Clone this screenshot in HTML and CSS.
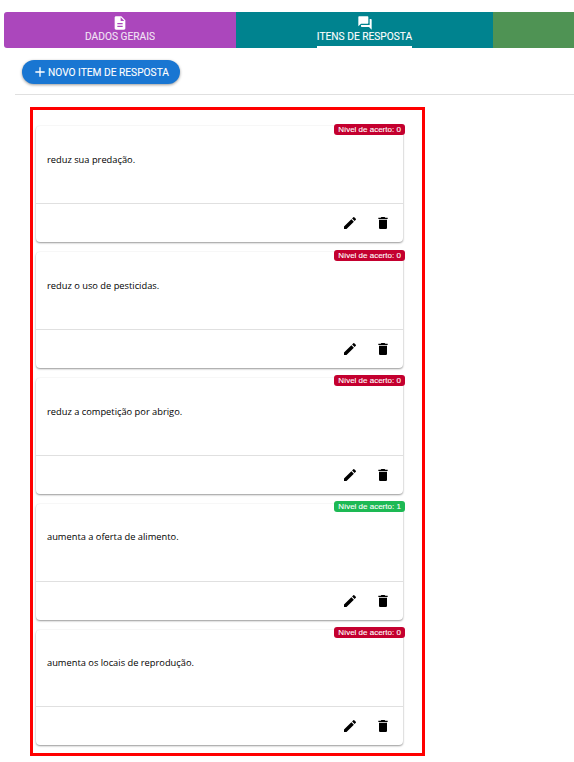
FILE: index.html
```html
<!DOCTYPE html>
<html lang="pt">
<head>
<meta charset="utf-8">
<title>Itens de resposta</title>
<link rel="stylesheet" href="styles.css">
</head>
<body>
<nav class="tabs">
  <div class="tab tab-purple">
    <svg class="tab-icon" viewBox="0 0 24 24"><path d="M14 2H6c-1.1 0-2 .9-2 2v16c0 1.1.9 2 2 2h12c1.1 0 2-.9 2-2V8l-6-6zm2 16H8v-2h8v2zm0-4H8v-2h8v2zm-3-5V3.5L18.500 9H13z"/></svg>
    <span class="tab-label">Dados gerais</span>
  </div>
  <div class="tab tab-teal">
    <svg class="tab-icon" viewBox="0 0 24 24"><path d="M21 6h-2v9H6v2c0 .55.45 1 1 1h11l4 4V7c0-.55-.45-1-1-1zm-4 6V3c0-.55-.45-1-1-1H3c-.55 0-1 .45-1 1v14l4-4h10c.55 0 1-.45 1-1z"/></svg>
    <span class="tab-label tab-label-active">Itens de resposta</span>
    <span class="tab-indicator"></span>
  </div>
  <div class="tab tab-green">
    <svg class="tab-icon" viewBox="0 0 24 24"><circle cx="12" cy="12" r="8"/></svg>
    <span class="tab-label">Gabarito</span>
  </div>
</nav>

<div class="toolbar">
  <button class="add-button" type="button">
    <svg class="add-icon" viewBox="0 0 24 24"><path d="M19 13h-6v6h-2v-6H5v-2h6V5h2v6h6v2z"/></svg>
    Novo item de resposta
  </button>
</div>

<main class="items">
  <article class="card">
    <span class="badge badge-red">Nível de acerto: 0</span>
    <p class="card-text">reduz sua predação.</p>
    <div class="card-actions">
      <svg class="action" viewBox="0 0 24 24"><path d="M3 17.250V21h3.750L17.810 9.940l-3.750-3.750L3 17.250zM20.710 7.040a.996.996 0 0 0 0-1.410l-2.340-2.340a.996.996 0 0 0-1.410 0l-1.830 1.830 3.750 3.750 1.830-1.830z"/></svg>
      <svg class="action" viewBox="0 0 24 24"><path d="M6 19c0 1.100.9 2 2 2h8c1.100 0 2-.9 2-2V7H6v12zM19 4h-3.500l-1-1h-5l-1 1H5v2h14V4z"/></svg>
    </div>
  </article>
  <article class="card">
    <span class="badge badge-red">Nível de acerto: 0</span>
    <p class="card-text">reduz o uso de pesticidas.</p>
    <div class="card-actions">
      <svg class="action" viewBox="0 0 24 24"><path d="M3 17.250V21h3.750L17.810 9.940l-3.750-3.750L3 17.250zM20.710 7.040a.996.996 0 0 0 0-1.410l-2.340-2.340a.996.996 0 0 0-1.410 0l-1.830 1.830 3.750 3.750 1.830-1.830z"/></svg>
      <svg class="action" viewBox="0 0 24 24"><path d="M6 19c0 1.100.9 2 2 2h8c1.100 0 2-.9 2-2V7H6v12zM19 4h-3.500l-1-1h-5l-1 1H5v2h14V4z"/></svg>
    </div>
  </article>
  <article class="card">
    <span class="badge badge-red">Nível de acerto: 0</span>
    <p class="card-text">reduz a competição por abrigo.</p>
    <div class="card-actions">
      <svg class="action" viewBox="0 0 24 24"><path d="M3 17.250V21h3.750L17.810 9.940l-3.750-3.750L3 17.250zM20.710 7.040a.996.996 0 0 0 0-1.410l-2.340-2.340a.996.996 0 0 0-1.410 0l-1.830 1.830 3.750 3.750 1.830-1.830z"/></svg>
      <svg class="action" viewBox="0 0 24 24"><path d="M6 19c0 1.100.9 2 2 2h8c1.100 0 2-.9 2-2V7H6v12zM19 4h-3.500l-1-1h-5l-1 1H5v2h14V4z"/></svg>
    </div>
  </article>
  <article class="card">
    <span class="badge badge-green">Nível de acerto: 1</span>
    <p class="card-text">aumenta a oferta de alimento.</p>
    <div class="card-actions">
      <svg class="action" viewBox="0 0 24 24"><path d="M3 17.250V21h3.750L17.810 9.940l-3.750-3.750L3 17.250zM20.710 7.040a.996.996 0 0 0 0-1.410l-2.340-2.340a.996.996 0 0 0-1.410 0l-1.830 1.830 3.750 3.750 1.830-1.830z"/></svg>
      <svg class="action" viewBox="0 0 24 24"><path d="M6 19c0 1.100.9 2 2 2h8c1.100 0 2-.9 2-2V7H6v12zM19 4h-3.500l-1-1h-5l-1 1H5v2h14V4z"/></svg>
    </div>
  </article>
  <article class="card">
    <span class="badge badge-red">Nível de acerto: 0</span>
    <p class="card-text">aumenta os locais de reprodução.</p>
    <div class="card-actions">
      <svg class="action" viewBox="0 0 24 24"><path d="M3 17.250V21h3.750L17.810 9.940l-3.750-3.750L3 17.250zM20.710 7.040a.996.996 0 0 0 0-1.410l-2.340-2.340a.996.996 0 0 0-1.410 0l-1.830 1.830 3.750 3.750 1.830-1.830z"/></svg>
      <svg class="action" viewBox="0 0 24 24"><path d="M6 19c0 1.100.9 2 2 2h8c1.100 0 2-.9 2-2V7H6v12zM19 4h-3.500l-1-1h-5l-1 1H5v2h14V4z"/></svg>
    </div>
  </article>
</main>
</body>
</html>
```

FILE: styles.css
```css
html, body {
  margin: 0;
  padding: 0;
  background: #fff;
  overflow: hidden;
  height: 762px;
}

body {
  padding-top: 12px;
  padding-left: 4px;
  font-family: "Roboto", "Liberation Sans", sans-serif;
  box-sizing: border-box;
}

.tabs {
  display: flex;
  height: 36px;
  width: 760px;
}

.tab {
  position: relative;
  display: flex;
  flex-direction: column;
  align-items: center;
  color: #fff;
  fill: #fff;
  box-sizing: border-box;
  padding-top: 3px;
}

.tab-purple {
  width: 232px;
  background: #ab47bc;
  border-radius: 3px 0 0 3px;
}

.tab-teal {
  width: 257px;
  background: #00838f;
}

.tab-green {
  width: 271px;
  background: #4f9354;
}

.tab-icon {
  width: 16px;
  height: 16px;
  display: block;
}

.tab-label {
  font-size: 10.200px;
  line-height: 14px;
  margin-top: -1px;
  text-transform: uppercase;
  opacity: 0.85;
  white-space: nowrap;
  -webkit-text-stroke: 0.1px currentColor;
}

.tab-label-active {
  opacity: 1;
}

.tab-indicator {
  position: absolute;
  left: 81px;
  width: 95px;
  bottom: 0;
  height: 2px;
  background: #fff;
}

.toolbar {
  margin: 12px 0 0 11px;
  padding: 0 0 10px 7px;
  border-bottom: 1px solid #e0e0e0;
  width: 559px;
  box-sizing: border-box;
}

.add-button {
  display: flex;
  align-items: center;
  gap: 0;
  height: 24px;
  width: 158px;
  border: 0;
  padding: 0 0 0 10px;
  border-radius: 12px;
  background: #1976d2;
  color: #fff;
  fill: #fff;
  font-family: "Roboto", "Liberation Sans", sans-serif;
  font-size: 10.200px;
  text-transform: uppercase;
  box-shadow: 0 1px 3px rgba(0, 0, 0, 0.4);
  white-space: nowrap;
  -webkit-text-stroke: 0.1px currentColor;
}

.add-icon {
  width: 16px;
  height: 16px;
  flex: none;
}

.items {
  margin: 12px 0 0 26px;
  width: 395px;
  height: 649px;
  border: 3px solid #f00;
  box-sizing: border-box;
  padding: 16px 0 0 3px;
  display: flex;
  flex-direction: column;
  gap: 10px;
}

.card {
  position: relative;
  width: 367px;
  height: 115.900px;
  flex: none;
  background: #fff;
  border-radius: 4px;
  box-shadow: 0 1px 2px rgba(0, 0, 0, 0.4), 0 0 2px rgba(0, 0, 0, 0.06);
  display: flex;
  flex-direction: column;
}

.badge {
  position: absolute;
  top: -2.350px;
  right: -2px;
  height: 11px;
  width: 71px;
  border-radius: 3px;
  color: #fff;
  font-family: "Liberation Sans", sans-serif;
  font-size: 8px;
  line-height: 11px;
  text-align: center;
  white-space: nowrap;
  -webkit-text-stroke: 0.1px currentColor;
}

.badge-red {
  background: #c4002f;
}

.badge-green {
  background: #1db954;
}

.card-text {
  flex: 1;
  margin: 0;
  padding: 26.750px 11px 0;
  font-family: "Open Sans", sans-serif;
  font-size: 9.300px;
  line-height: 14px;
  color: #000;
}

.card-actions {
  height: 39.050px;
  box-sizing: border-box;
  flex: none;
  border-top: 1px solid #e0e0e0;
  display: flex;
  justify-content: flex-end;
  align-items: center;
  gap: 17px;
  padding-right: 12px;
}

.action {
  width: 16px;
  height: 16px;
  fill: #000;
}
```
